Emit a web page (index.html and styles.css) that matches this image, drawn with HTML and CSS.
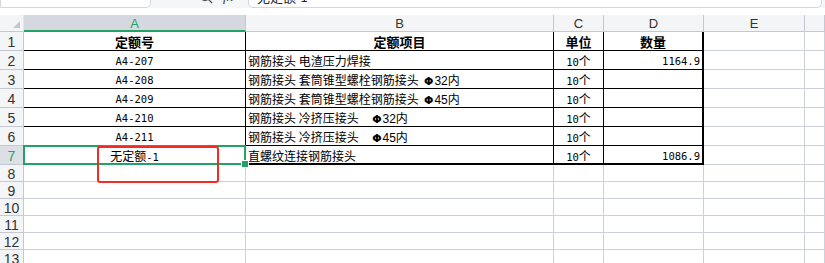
FILE: index.html
```html
<!DOCTYPE html>
<html lang="zh-CN">
<head>
    <meta charset="UTF-8">
    <title>定额表</title>
    <link rel="stylesheet" href="styles.css">
</head>
<body>
    <div class="toolbar">
        <div class="namebox">A7</div>
        <div class="fx-icons">
            <svg width="14" height="14" viewBox="0 0 14 14"><circle cx="6" cy="6" r="4.5" fill="none" stroke="#555" stroke-width="1.3"/><line x1="9.2" y1="9.2" x2="13" y2="13" stroke="#555" stroke-width="1.3"/></svg>
            <span class="fx">fx</span>
        </div>
        <div class="formula">无定额-1</div>
    </div>

    <div class="sheet">
        <div class="corner"></div>
        <div class="col-h sel">A</div>
        <div class="col-h">B</div>
        <div class="col-h">C</div>
        <div class="col-h">D</div>
        <div class="col-h">E</div>
        <div class="col-h"></div>

        <div class="row-h">1</div>
        <div class="c t mid bold">定额号</div>
        <div class="c t mid bold">定额项目</div>
        <div class="c t mid bold">单位</div>
        <div class="c t tr mid bold">数量</div>
        <div class="c"></div>
        <div class="c"></div>

        <div class="row-h">2</div>
        <div class="c t mid mono">A4-207</div>
        <div class="c t">钢筋接头 电渣压力焊接</div>
        <div class="c t mid mono">10<span class="cjk">个</span></div>
        <div class="c t tr right mono">1164.9</div>
        <div class="c"></div>
        <div class="c"></div>

        <div class="row-h">3</div>
        <div class="c t mid mono">A4-208</div>
        <div class="c t">钢筋接头 套筒锥型螺栓钢筋接头&nbsp;&nbsp;<b class="phi">Φ</b><span class="num">32</span>内</div>
        <div class="c t mid mono">10<span class="cjk">个</span></div>
        <div class="c t tr"></div>
        <div class="c"></div>
        <div class="c"></div>

        <div class="row-h">4</div>
        <div class="c t mid mono">A4-209</div>
        <div class="c t">钢筋接头 套筒锥型螺栓钢筋接头&nbsp;&nbsp;<b class="phi">Φ</b><span class="num">45</span>内</div>
        <div class="c t mid mono">10<span class="cjk">个</span></div>
        <div class="c t tr"></div>
        <div class="c"></div>
        <div class="c"></div>

        <div class="row-h">5</div>
        <div class="c t mid mono">A4-210</div>
        <div class="c t">钢筋接头 冷挤压接头&nbsp;&nbsp;&nbsp;&nbsp;&nbsp;<b class="phi">Φ</b><span class="num">32</span>内</div>
        <div class="c t mid mono">10<span class="cjk">个</span></div>
        <div class="c t tr"></div>
        <div class="c"></div>
        <div class="c"></div>

        <div class="row-h">6</div>
        <div class="c t mid mono">A4-211</div>
        <div class="c t">钢筋接头 冷挤压接头&nbsp;&nbsp;&nbsp;&nbsp;&nbsp;<b class="phi">Φ</b><span class="num">45</span>内</div>
        <div class="c t mid mono">10<span class="cjk">个</span></div>
        <div class="c t tr"></div>
        <div class="c"></div>
        <div class="c"></div>

        <div class="row-h sel">7</div>
        <div class="c t tb mid mono active"><span class="cjk">无定额</span>-1</div>
        <div class="c t tb">直螺纹连接钢筋接头</div>
        <div class="c t tb mid mono">10<span class="cjk">个</span></div>
        <div class="c t tb tr right mono">1086.9</div>
        <div class="c"></div>
        <div class="c"></div>

        <div class="row-h">8</div><div class="c"></div><div class="c"></div><div class="c"></div><div class="c"></div><div class="c"></div><div class="c"></div>
        <div class="row-h">9</div><div class="c"></div><div class="c"></div><div class="c"></div><div class="c"></div><div class="c"></div><div class="c"></div>
        <div class="row-h">10</div><div class="c"></div><div class="c"></div><div class="c"></div><div class="c"></div><div class="c"></div><div class="c"></div>
        <div class="row-h">11</div><div class="c"></div><div class="c"></div><div class="c"></div><div class="c"></div><div class="c"></div><div class="c"></div>
        <div class="row-h">12</div><div class="c"></div><div class="c"></div><div class="c"></div><div class="c"></div><div class="c"></div><div class="c"></div>
        <div class="row-h">13</div><div class="c"></div><div class="c"></div><div class="c"></div><div class="c"></div><div class="c"></div><div class="c"></div>
    </div>

    <div class="mark"></div>
</body>
</html>
```

FILE: styles.css
```css
* {
    margin: 0;
    padding: 0;
    box-sizing: border-box;
}
body {
    background: #fff;
    width: 825px;
    height: 263px;
    overflow: hidden;
    position: relative;
    font-family: "Noto Sans CJK SC", sans-serif;
    color: #000;
}
.toolbar {
    height: 8px;
    background: #f5f6f8;
    display: flex;
    align-items: flex-end;
    overflow: hidden;
}
.namebox {
    width: 151px;
    height: 24px;
    flex: none;
    background: #fff;
    border: 1px solid #d3d6dc;
    border-radius: 0 0 5px 0;
    font: 14px "Liberation Sans", sans-serif;
    color: #333;
    padding: 2px 0 0 58px;
}
.fx-icons {
    width: 97px;
    height: 24px;
    flex: none;
    display: flex;
    align-items: center;
    gap: 10px;
    padding-left: 48px;
    padding-top: 2px;
}
.fx {
    font: italic 14px "Liberation Serif", serif;
    color: #444;
}
.formula {
    flex: 1;
    height: 24px;
    margin-right: 3px;
    background: #fff;
    border: 1px solid #d3d6dc;
    border-radius: 0 0 5px 5px;
    font-size: 13px;
    color: #222;
    padding: 2px 0 0 8px;
}
.sheet {
    margin-top: 7px;
    display: grid;
    grid-template-columns: 24px 222px 308px 50px 100px 101px 1fr;
    grid-template-rows: 17px repeat(7, 19px) repeat(6, 17px);
}
.corner, .col-h, .row-h {
    background: #f4f5f7;
    border-right: 1px solid #c3c8d3;
    border-bottom: 1px solid #c3c8d3;
    color: #333;
    font-family: "Liberation Sans", sans-serif;
    display: flex;
    align-items: center;
    justify-content: center;
}
.corner {
    position: relative;
    border-right-color: #e2e4e8;
}
.corner::after {
    content: "";
    position: absolute;
    right: 3px;
    bottom: 3px;
    border-left: 7px solid transparent;
    border-bottom: 7px solid #c4c7cc;
}
.col-h {
    font-size: 13px;
    padding-top: 1px;
}
.col-h.sel {
    background: #d5d8de;
    color: #21a366;
    border-bottom: 2px solid #21a366;
}
.row-h {
    font-size: 14px;
    padding-top: 1px;
}
.row-h.sel {
    background: #dcdfe4;
    color: #21a366;
}
.c {
    border-right: 1px solid #cdd1dc;
    border-bottom: 1px solid #cdd1dc;
    font-size: 12px;
    line-height: 18px;
    padding: 1px 0 0 2px;
    white-space: nowrap;
    overflow: hidden;
}
.c.t {
    border-right-color: #000;
    border-bottom-color: #000;
}
.c.tr {
    border-right-width: 2px;
}
.c.tb {
    border-bottom-width: 2px;
}
.mid {
    text-align: center;
    padding-left: 0;
}
.right {
    text-align: right;
    padding-right: 2px;
}
.bold {
    font-size: 13px;
    font-weight: 700;
}
.mono {
    font-family: "DejaVu Sans Mono", monospace;
    font-size: 10.5px;
}
.cjk {
    font-family: "Noto Sans CJK SC", sans-serif;
    font-size: 12px;
}
.phi {
    font-family: "DejaVu Sans", sans-serif;
    font-size: 11px;
}
.num {
    font-family: "Liberation Sans", sans-serif;
    font-size: 12px;
    margin-left: 1px;
}
.active {
    position: relative;
    overflow: visible;
}
.active::after {
    content: "";
    position: absolute;
    left: -1px;
    top: -1px;
    right: -1px;
    bottom: -2px;
    border: 2px solid #21a366;
}
.active::before {
    content: "";
    position: absolute;
    right: -4px;
    bottom: -5px;
    width: 6px;
    height: 6px;
    background: #21a366;
    border: 1px solid #fff;
    z-index: 1;
}
.mark {
    position: absolute;
    left: 97px;
    top: 146px;
    width: 122px;
    height: 37px;
    border: 2px solid #f52a22;
    border-radius: 3px;
}
```
